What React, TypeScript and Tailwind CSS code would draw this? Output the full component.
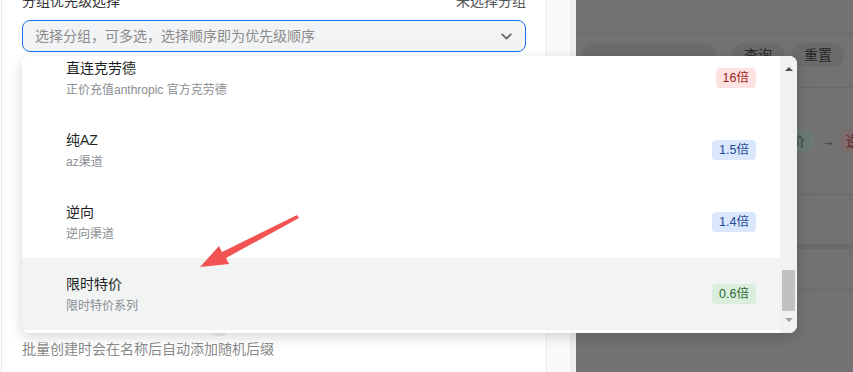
import { ChevronDown } from "lucide-react";

interface Group {
  name: string;
  desc: string;
  ratio: string;
  tone: "red" | "blue" | "green";
  active?: boolean;
}

const groups: Group[] = [
  { name: "直连克劳德", desc: "正价充值anthropic 官方克劳德", ratio: "16倍", tone: "red" },
  { name: "纯AZ", desc: "az渠道", ratio: "1.5倍", tone: "blue" },
  { name: "逆向", desc: "逆向渠道", ratio: "1.4倍", tone: "blue" },
  { name: "限时特价", desc: "限时特价系列", ratio: "0.6倍", tone: "green", active: true },
];

const toneClass = {
  red: "bg-[#fde2e2] text-[#a31d1d]",
  blue: "bg-[#dbe7fd] text-[#1f4a98]",
  green: "bg-[#dbeedd] text-[#2b6a35]",
};

const GroupItem = ({ group }: { group: Group }) => (
  <div
    className={`h-[72px] flex items-center justify-between pl-[44px] pr-[24px] ${
      group.active ? "bg-[#f2f4f3]" : "bg-white"
    }`}
  >
    <div className="flex flex-col">
      <span className="text-[14px] leading-5 text-[#1c1f23]">{group.name}</span>
      <span className="mt-[3px] text-[12px] leading-[18px] text-[#8a8d93]">{group.desc}</span>
    </div>
    <span className={`h-5 px-[7px] rounded-[4px] text-[12.5px] leading-5 ${toneClass[group.tone]}`}>
      {group.ratio}
    </span>
  </div>
);

const Dropdown = () => (
  <div className="absolute left-[22px] top-[56px] w-[775px] h-[277px] rounded-lg bg-white shadow-[0_4px_14px_rgba(0,0,0,0.16)] overflow-hidden flex">
    <div className="flex-1 overflow-hidden">
      <div className="-mt-[14px]">
        {groups.map((g) => (
          <GroupItem key={g.name} group={g} />
        ))}
      </div>
    </div>
    <div className="w-[17px] bg-[#f1f1f1] flex flex-col items-center">
      <div className="mt-[11px] w-0 h-0 border-l-[4px] border-r-[4px] border-b-[4px] border-l-transparent border-r-transparent border-b-[#505050]" />
      <div className="mt-[199px] w-[13px] h-[41px] bg-[#c1c1c1]" />
      <div className="mt-[7px] w-0 h-0 border-l-[4px] border-r-[4px] border-t-[4px] border-l-transparent border-r-transparent border-t-[#a3a3a3]" />
    </div>
  </div>
);

const Backdrop = () => (
  <div className="flex-1 min-w-0 overflow-hidden bg-[#727272] flex flex-col">
    <div className="h-[33px] shrink-0" />
    <div className="h-px shrink-0 bg-[#686868]" />
    <div className="h-[53px] shrink-0 pt-[9px] flex text-[14px] text-[#262626]">
      <div className="ml-[6px] w-[134px] shrink-0 h-6 rounded-full bg-[#6c6c6c]" />
      <div className="ml-[16px] w-[52px] shrink-0 h-6 rounded-full bg-[#6b6b6b] flex items-center justify-center">查询</div>
      <div className="ml-[8px] w-[52px] shrink-0 h-6 rounded-full bg-[#6b6b6b] flex items-center justify-center">重置</div>
    </div>
    <div className="h-px shrink-0 bg-[#686868]" />
    <div className="h-[106px] shrink-0 flex items-center pl-[191px] gap-[5px] text-[14px] whitespace-nowrap">
      <span className="shrink-0 h-6 px-[10px] rounded-full bg-[#6b7a72] text-[#2f4b3c] leading-6">特价</span>
      <span className="shrink-0 text-[#3a3a3a] text-[15px]">→</span>
      <span className="shrink-0 h-6 px-[6px] rounded-full bg-[#7e6c6c] text-[#5b1f1f] leading-6">逆向</span>
    </div>
    <div className="h-px shrink-0 bg-[#686868]" />
    <div className="h-[49px] shrink-0" />
    <div className="h-[5px] shrink-0 bg-[#6a6a6a]" />
    <div className="h-[40px] shrink-0" />
    <div className="h-px shrink-0 bg-[#686868]" />
  </div>
);

const Arrow = () => (
  <svg className="absolute left-0 top-0 pointer-events-none" width="853" height="372">
    <polygon
      points="200,267 219,246 222,252 297,215 299,218 226,258 229,264"
      fill="#f15353"
    />
  </svg>
);

export default function App() {
  return (
    <div className="relative w-[853px] h-[372px] overflow-hidden flex bg-white font-['Liberation_Sans','Noto_Sans_CJK_SC',sans-serif]">
      <div className="w-[2px] shrink-0 border-r border-[#e9e9e9]" />
      <div className="w-[545px] shrink-0 border-r border-[#ebebeb] px-[20px] flex flex-col">
        <div className="-mt-[10px] h-[22px] flex justify-between text-[14px] leading-[22px] text-[#333]">
          <span>分组优先级选择</span>
          <span className="text-[#555]">未选择分组</span>
        </div>
        <div className="mt-2 h-8 rounded-lg border border-[#1a73f5] bg-[#f2f3f4] flex items-center justify-between pl-3 pr-[10px]">
          <span className="text-[14px] text-[#8c8c8c]">选择分组，可多选，选择顺序即为优先级顺序</span>
          <ChevronDown className="w-[17px] h-[17px] text-[#666]" strokeWidth={2.5} />
        </div>
        <div className="mt-[278px] ml-[190px] w-[14px] h-[6px] bg-[#eeeeee] rounded-b" />
        <div className="mt-[2px] text-[14px] leading-[22px] text-[#8a8a8a]">批量创建时会在名称后自动添加随机后缀</div>
      </div>
      <div className="w-[23px] shrink-0 bg-[#fafafa]" />
      <div className="w-[6px] shrink-0 bg-[#efefef]" />
      <Backdrop />
      <Dropdown />
      <Arrow />
    </div>
  );
}
